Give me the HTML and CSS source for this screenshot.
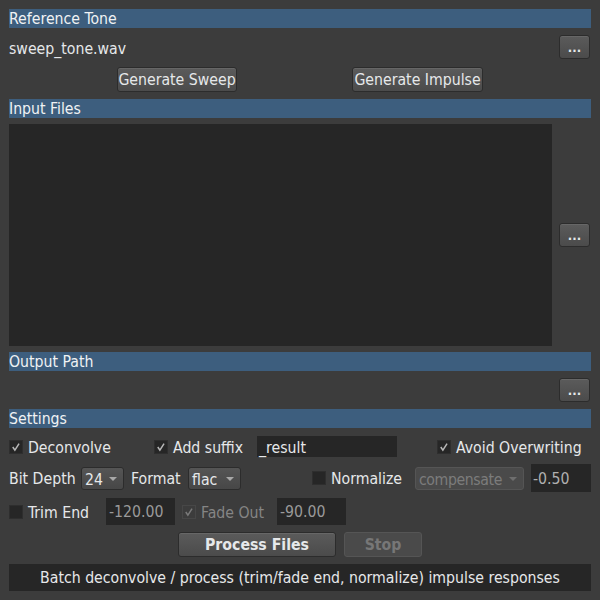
FILE: index.html
```html
<!DOCTYPE html>
<html>
<head>
<meta charset="utf-8">
<link rel="stylesheet" href="styles.css">
</head>
<body>
<div class="app">
  <div class="hdr">Reference Tone</div>
  <div class="row file-row">
    <span class="fname">sweep_tone.wav</span>
    <button class="btn dots">...</button>
  </div>
  <div class="row gen-row">
    <button class="btn gen sweep">Generate Sweep</button>
    <button class="btn gen impulse">Generate Impulse</button>
  </div>
  <div class="hdr h2">Input Files</div>
  <div class="row list-row">
    <div class="list"></div>
    <button class="btn dots">...</button>
  </div>
  <div class="hdr h3">Output Path</div>
  <div class="row out-row">
    <button class="btn dots">...</button>
  </div>
  <div class="hdr h4">Settings</div>
  <div class="row s1">
    <span class="cb on"><svg viewBox="0 0 13 13"><path d="M3 6.5 L5.3 10 L9.8 2.8" /></svg></span>
    <span class="lbl w-decon">Deconvolve</span>
    <span class="cb on"><svg viewBox="0 0 13 13"><path d="M3 6.5 L5.3 10 L9.8 2.8" /></svg></span>
    <span class="lbl w-suffix">Add suffix</span>
    <span class="field suffix">_result</span>
    <span class="cb on avoid-cb"><svg viewBox="0 0 13 13"><path d="M3 6.5 L5.3 10 L9.8 2.8" /></svg></span>
    <span class="lbl">Avoid Overwriting</span>
  </div>
  <div class="row s2">
    <span class="lbl w-bit">Bit Depth</span>
    <span class="combo c24">24<i class="arr"></i></span>
    <span class="lbl w-fmt">Format</span>
    <span class="combo cflac">flac<i class="arr"></i></span>
    <span class="cb norm-cb"></span>
    <span class="lbl w-norm">Normalize</span>
    <span class="combo ccomp dis">compensate<i class="arr"></i></span>
    <span class="field fnorm">-0.50</span>
  </div>
  <div class="row s3">
    <span class="cb"></span>
    <span class="lbl w-trim">Trim End</span>
    <span class="field ftrim">-120.00</span>
    <span class="cb on dis-cb"><svg viewBox="0 0 13 13"><path d="M3 6.5 L5.3 10 L9.8 2.8" /></svg></span>
    <span class="lbl dis w-fade">Fade Out</span>
    <span class="field ffade">-90.00</span>
  </div>
  <div class="row actions">
    <button class="btn bold process">Process Files</button>
    <button class="btn bold stop" disabled>Stop</button>
  </div>
  <div class="status">Batch deconvolve / process (trim/fade end, normalize) impulse responses</div>
</div>
</body>
</html>
```
FILE: styles.css
```css
* { box-sizing: border-box; }
html, body { margin: 0; padding: 0; }
body {
  background: #3c3c3c;
  width: 600px;
  height: 600px;
  font-family: "DejaVu Sans Condensed", "DejaVu Sans", sans-serif;
  font-size: 15.7px;
  color: #e6e8ea;
}
.app {
  padding: 9px 9px 0 9px;
  display: flex;
  flex-direction: column;
}
.hdr {
  height: 19px;
  background: #3d5e7e;
  line-height: 20px;
  padding-left: 0;
  color: #f0f2f4;
  overflow: hidden;
}
.row { display: flex; align-items: center; }
.btn {
  font-family: inherit;
  font-size: 15.7px;
  color: #e6e8ea;
  background: linear-gradient(#5b5b5b, #4b4b4b);
  border: 1px solid #2c2c2c;
  border-radius: 3px;
  box-shadow: inset 0 1px 0 rgba(255,255,255,0.08);
  padding: 0;
  height: 25px;
  line-height: 23px;
}
.dots {
  width: 31px;
  height: 24px;
  margin-left: auto;
  margin-right: 1px;
  font-weight: bold;
  font-size: 13px;
  line-height: 24px;
}
.file-row { margin-top: 7px; height: 24px; }
.fname { padding-left: 0; padding-top: 2px; }
.gen-row { margin-top: 8px; height: 25px; }
.sweep { margin-left: 108px; width: 120px; }
.impulse { margin-left: 115px; width: 131px; }
.h2 { margin-top: 7px; }
.list-row { margin-top: 6px; height: 222px; }
.list { width: 543px; height: 222px; background: #262626; }
.h3 { margin-top: 6px; }
.out-row { margin-top: 7px; height: 24px; }
.h4 { margin-top: 7px; }
.cb {
  width: 14px;
  height: 14px;
  background: #262626;
  border: 1px solid #2e2e2e;
  flex: none;
  display: inline-flex;
}
.cb svg { width: 12px; height: 12px; }
.cb svg path { fill: none; stroke: #b8b8b8; stroke-width: 1.6; }
.dis-cb svg path { stroke: #7a7a7a; }
.lbl { white-space: nowrap; padding-left: 5px; padding-top: 1px; }
.lbl.dis { color: #858585; }
.field {
  background: #262626;
  height: 22px;
  line-height: 23px;
  padding-left: 2px;
  flex: none;
}
.s1 { margin-top: 8px; height: 21px; }
.w-decon { width: 131px; }
.w-suffix { width: 89px; }
.suffix { width: 140px; height: 21px; }
.avoid-cb { margin-left: 40px; }
.s2 { margin-top: 7px; height: 28px; }
.w-bit { width: 72px; padding-left: 0; }
.combo {
  position: relative;
  height: 23px;
  line-height: 23px;
  border: 1px solid #2c2c2c;
  border-radius: 3px;
  background: linear-gradient(#555, #474747);
  padding-left: 3px;
  flex: none;
  white-space: nowrap;
}
.combo .arr {
  position: absolute;
  right: 6px;
  top: 9px;
  width: 0; height: 0;
  border-left: 4px solid transparent;
  border-right: 4px solid transparent;
  border-top: 4px solid #a8a8a8;
}
.c24 { width: 43px; }
.w-fmt { width: 64px; padding-left: 7px; }
.cflac { width: 53px; }
.norm-cb { margin-left: 71px; }
.w-norm { width: 89px; }
.ccomp { width: 109px; color: #7c7c7c; background: #4a4a4a; border-color: #555; letter-spacing: -0.4px; }
.ccomp .arr { border-top-color: #6e6e6e; }
.fnorm { width: 60px; height: 28px; line-height: 29px; margin-left: 7px; color: #b0b0b0; }
.s3 { margin-top: 6px; height: 27px; }
.w-trim { width: 83px; }
.field.ftrim, .field.ffade { height: 27px; line-height: 28px; color: #9a9a9a; padding-left: 3px; }
.ftrim { width: 69px; }
.dis-cb { margin-left: 7px; background: #3c3c3c; border-color: #474747; }
.w-fade { width: 81px; }
.ffade { width: 69px; }
.actions { margin-top: 7px; height: 25px; justify-content: center; gap: 8px; }
.bold { font-weight: bold; }
.process { width: 158px; }
.stop { width: 78px; color: #777; background: #4a4a4a; border-color: #555; box-shadow: none; }
.status {
  margin-top: 7px;
  height: 27px;
  line-height: 28px;
  background: #262626;
  text-align: center;
}
```
